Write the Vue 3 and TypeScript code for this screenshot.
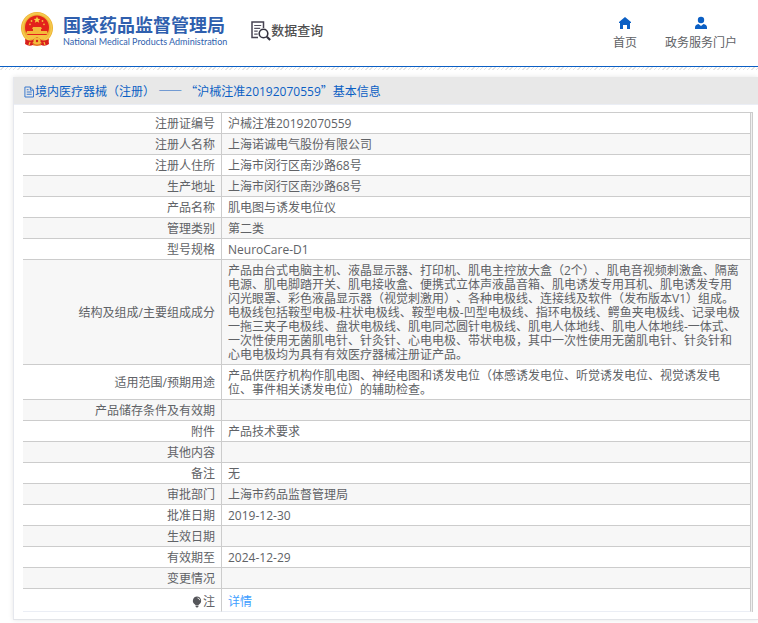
<script setup lang="ts">
interface Row {
  label: string
  value: string
}

const rows: Row[] = [
  { label: '注册证编号', value: '沪械注准20192070559' },
  { label: '注册人名称', value: '上海诺诚电气股份有限公司' },
  { label: '注册人住所', value: '上海市闵行区南沙路68号' },
  { label: '生产地址', value: '上海市闵行区南沙路68号' },
  { label: '产品名称', value: '肌电图与诱发电位仪' },
  { label: '管理类别', value: '第二类' },
  { label: '型号规格', value: 'NeuroCare-D1' },
  {
    label: '结构及组成/主要组成成分',
    value:
      '产品由台式电脑主机、液晶显示器、打印机、肌电主控放大盒（2个）、肌电音视频刺激盒、隔离电源、肌电脚踏开关、肌电接收盒、便携式立体声液晶音箱、肌电诱发专用耳机、肌电诱发专用闪光眼罩、彩色液晶显示器（视觉刺激用）、各种电极线、连接线及软件（发布版本V1）组成。电极线包括鞍型电极-柱状电极线、鞍型电极-凹型电极线、指环电极线、鳄鱼夹电极线、记录电极一拖三夹子电极线、盘状电极线、肌电同芯圆针电极线、肌电人体地线、肌电人体地线-一体式、一次性使用无菌肌电针、针灸针、心电电极、带状电极，其中一次性使用无菌肌电针、针灸针和心电电极均为具有有效医疗器械注册证产品。',
  },
  {
    label: '适用范围/预期用途',
    value:
      '产品供医疗机构作肌电图、神经电图和诱发电位（体感诱发电位、听觉诱发电位、视觉诱发电位、事件相关诱发电位）的辅助检查。',
  },
  { label: '产品储存条件及有效期', value: '' },
  { label: '附件', value: '产品技术要求' },
  { label: '其他内容', value: '' },
  { label: '备注', value: '无' },
  { label: '审批部门', value: '上海市药品监督管理局' },
  { label: '批准日期', value: '2019-12-30' },
  { label: '生效日期', value: '' },
  { label: '有效期至', value: '2024-12-29' },
  { label: '变更情况', value: '' },
]
</script>

<template>
  <div class="page" lang="zh-CN">
    <header class="header">
      <div class="brand">
        <svg class="emblem" viewBox="0 0 32 35" aria-hidden="true">
          <path d="M5 24 4 32q4 3 8 1l4 1 4-1q4 2 8-1l-1-8z" fill="#d81f1c" />
          <circle cx="16" cy="16" r="16" fill="#eeb233" />
          <circle cx="16" cy="16" r="14.4" fill="none" stroke="#f4c94e" stroke-width="1.6" />
          <circle cx="16" cy="15.4" r="12" fill="#e3221b" />
          <path d="m16 4.500 1 2.200 2.400.2-1.900 1.500.7 2.400-2.200-1.300-2.200 1.300.7-2.400-1.900-1.500 2.400-.2z" fill="#f8cf43" />
          <g fill="#f3b93a">
            <circle cx="10.500" cy="9" r=".9" />
            <circle cx="21.500" cy="9" r=".9" />
            <circle cx="9" cy="12.300" r=".9" />
            <circle cx="23" cy="12.300" r=".9" />
            <path d="M12 15h8l1 2h-1v2h6l1 3H5l1-3h6v-2h-1z" />
          </g>
          <path d="M5 23h22l-3 4H8z" fill="#f5c344" />
          <path d="M4 27q6 3 9 0l3-2 3 2q3 3 9 0l-1 3-6 1-5-3-5 3-6-1z" fill="#d81f1c" />
          <circle cx="16" cy="29" r="3.600" fill="#f2bd3b" />
          <circle cx="16" cy="29" r="1.200" fill="#d81f1c" />
          <path d="m9 30-1 3M23 30l1 3M12 33h8" stroke="#f2bd3b" stroke-width="1.200" />
        </svg>
        <div class="brand-text">
          <span class="brand-cn">国家药品监督管理局</span>
          <span class="brand-en">National Medical Products Administration</span>
        </div>
      </div>
      <div class="section">
        <svg class="section-icon" viewBox="0 0 20 20" aria-hidden="true">
          <path d="M12.500 7V1H1v15.500h6" fill="none" stroke="#454250" stroke-width="1.500" />
          <path d="M3.200 4.500h7M3.200 7.300h6M3.200 10.200h3.500M3.200 13.200h3.500" stroke="#555260" stroke-width="1.200" />
          <circle cx="12.500" cy="12.500" r="4.300" fill="#fff" stroke="#353340" stroke-width="1.600" />
          <path d="m15.800 15.800 3.400 3.200" stroke="#353340" stroke-width="2.200" />
        </svg>
        <span>数据查询</span>
      </div>
      <nav class="nav">
        <a href="#home">
          <svg viewBox="0 0 14 14" aria-hidden="true">
            <path d="M7 1 13 6v1h-1v6H9V9H5v4H2V7H1V6z" fill="#0b5fc4" />
          </svg>
          <span>首页</span>
        </a>
        <a href="#portal">
          <svg viewBox="0 0 14 14" aria-hidden="true">
            <circle cx="7" cy="4" r="3.200" fill="#0b5fc4" />
            <path d="M1 13V11.500q0-3 3.500-3.500L7 10l2.500-2Q13 8.500 13 11.500V13z" fill="#0b5fc4" />
          </svg>
          <span>政务服务门户</span>
        </a>
      </nav>
    </header>
    <div class="hatch"></div>

    <main class="card">
      <h1 class="title">
        <svg viewBox="0 0 11 12" aria-hidden="true">
          <path d="M1 .5h6l3.500 3.500v7.500H1z M7 .5V4h3.500 M3 6h5.500 M3 8.500h5.500 M3 3.500h2" fill="none" stroke="#2a70cc" />
        </svg>
        <span>境内医疗器械（注册） <span class="cjk">——</span> <span class="cjk">“</span>沪械注准20192070559<span class="cjk">”</span>基本信息</span>
      </h1>
      <div class="table-frame">
        <table>
          <tbody>
            <tr v-for="row in rows" :key="row.label">
              <th scope="row">{{ row.label }}</th>
              <td>{{ row.value }}</td>
            </tr>
            <tr class="note">
              <th scope="row">
                <span class="note-label">
                  <svg viewBox="0 0 10 12" aria-hidden="true">
                    <path d="M5 .5a4.300 4.300 0 0 1 2.300 7.800L6.500 9h-3l-.8-.7A4.300 4.300 0 0 1 5 .5zM3.500 9.500h3v1l-1 1h-1l-1-1z" fill="#55565a" />
                    <path d="M5.500 2q2 .2 2.300 2.200" fill="none" stroke="#fff" stroke-width=".8" />
                  </svg>注
                </span>
              </th>
              <td><a href="#detail">详情</a></td>
            </tr>
          </tbody>
        </table>
      </div>
    </main>
  </div>
</template>

<style>
body {
  background: #fff;
}
</style>

<style scoped>
.page {
  font-family: 'Open Sans', 'Noto Sans CJK SC', sans-serif;
  font-size: 12px;
  color: #606266;
  text-spacing-trim: space-all;
  overflow: hidden;
}

.header {
  display: flex;
  align-items: center;
  height: 66px;
  padding: 0 21px;
  box-sizing: border-box;
}

.brand {
  display: flex;
  align-items: center;
  gap: 10px;
  padding-bottom: 8px;
}

.emblem {
  width: 32px;
  height: 35px;
}

.brand-text {
  display: flex;
  flex-direction: column;
  padding-top: 4px;
  color: #2f5fae;
  white-space: nowrap;
}

.brand-cn {
  font-size: 18px;
  line-height: 22px;
  font-weight: 700;
}

.brand-en {
  font-family: Lato, sans-serif;
  font-size: 9px;
  line-height: 12px;
}

.section {
  display: flex;
  align-items: center;
  margin-left: 24px;
  padding-bottom: 4px;
  font-size: 13px;
  font-weight: 500;
  line-height: 18px;
  color: #505050;
}

.section span {
  padding-bottom: 2px;
}

.section-icon {
  width: 20px;
  height: 20px;
}

.nav {
  display: flex;
  gap: 28px;
  margin-left: auto;
}

.nav a {
  display: flex;
  flex-direction: column;
  align-items: center;
  gap: 5px;
  color: #606266;
  line-height: 16px;
  text-decoration: none;
}

.nav svg {
  width: 14px;
  height: 14px;
}

.hatch {
  height: 3px;
  border-top: 1px solid #0b5fc4;
  background: repeating-linear-gradient(135deg, #fff 0 2px, #e4e4e4 2px 3px);
}

.card {
  margin: 7px 0 3px 13px;
  padding-bottom: 7px;
  border-left: 1px solid #e6e8ee;
  border-bottom: 1px solid #e2e4e8;
  box-shadow: 0 0 5px rgba(0, 0, 0, 0.1);
}

.title {
  display: flex;
  align-items: center;
  gap: 1px;
  height: 25px;
  margin: 0;
  padding: 2px 0 0 10px;
  border-bottom: 1px solid #ebeef5;
  background: #e8e8e8;
  color: #0b5fc4;
  font-size: 12px;
  font-weight: 400;
  line-height: 16px;
}

.title svg {
  width: 10px;
  height: 12px;
}

.cjk {
  font-family: 'Noto Sans CJK SC', sans-serif;
}

.table-frame {
  margin: 7px 5px 0 9px;
  padding-right: 1px;
  border-top: 1px solid #ccc;
  border-right: 1px solid #ccc;
  background: #f0f0f0;
}

table {
  width: 100%;
  border-spacing: 0;
  table-layout: fixed;
  background: #fff;
}

th,
td {
  height: 14px;
  border-right: 1px solid #ccc;
  border-bottom: 1px solid #ccc;
  font-weight: 400;
  line-height: 14px;
}

th {
  width: 186px;
  padding: 4px 6px 2px;
  text-align: right;
}

td {
  padding: 4px 8px 2px 6px;
  text-align: left;
}

tr:nth-child(even) {
  background: #f7f7f7;
}

.note th,
.note td {
  padding-top: 6px;
  padding-bottom: 2px;
  border-bottom-color: #ebeef5;
  background: #fff;
}

.note-label {
  display: inline-flex;
  align-items: center;
  gap: 1px;
  vertical-align: top;
}

.note svg {
  width: 10px;
  height: 12px;
}

.note a {
  color: #409eff;
  text-decoration: none;
}
</style>
